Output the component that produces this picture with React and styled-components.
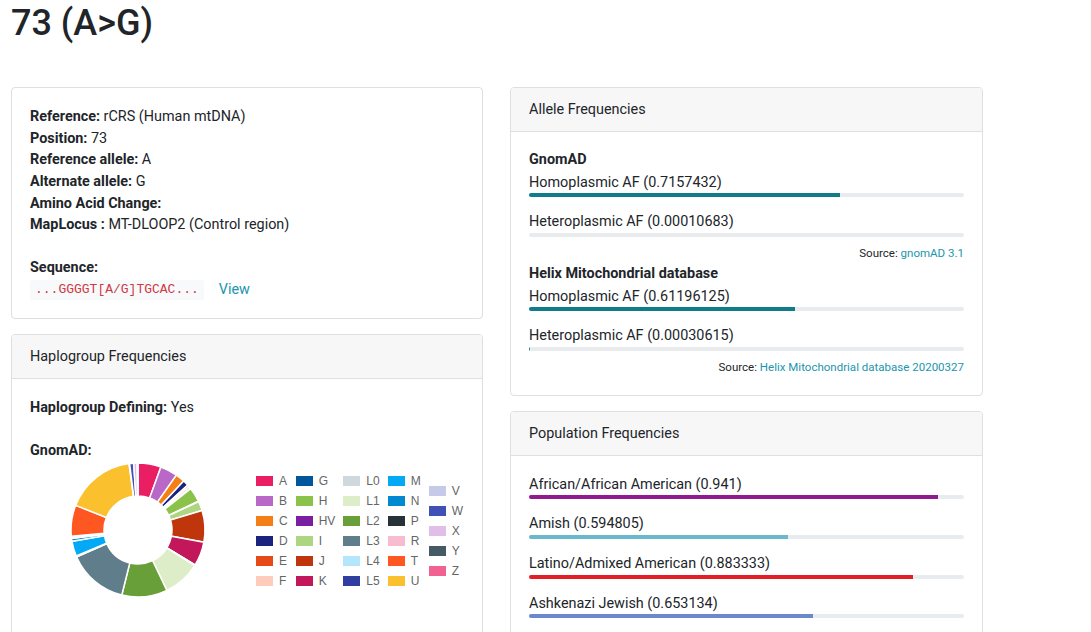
import React from 'react'
import styled, { createGlobalStyle } from 'styled-components'

const GlobalStyle = createGlobalStyle`
  body {
    margin: 0;
    background: #fff;
    color: #212529;
    font-family: Roboto, "Liberation Sans", sans-serif;
    font-size: 14.4px;
    line-height: 1.5;
  }
`

const Page = styled.div`
  padding: 2px 11px 0 11px;
`

const Title = styled.h1`
  margin: 0 0 42px 0;
  font-size: 36px;
  font-weight: 500;
  line-height: 1.2;
`

const Columns = styled.div`
  display: grid;
  grid-template-columns: 472px 473px;
  column-gap: 27px;
  align-items: start;
`

const Column = styled.div`
  display: flex;
  flex-direction: column;
  gap: 15px;
`

const Card = styled.section`
  border: 1px solid #dfdfdf;
  border-radius: 4px;
  background: #fff;
`

const CardHeader = styled.header`
  padding: 11px 18px;
  line-height: 21px;
  background: #f7f7f7;
  border-bottom: 1px solid #dfdfdf;
  border-radius: 3px 3px 0 0;
`

const CardBody = styled.div`
  padding: ${p => p.pad || '18px'};
  line-height: 21.6px;
`

const Line = styled.div`
  min-height: 21.6px;
`

const Label = styled.b`
  font-weight: 700;
`

const SeqRow = styled.div`
  display: flex;
  align-items: center;
  gap: 15px;
`

const Code = styled.code`
  font-family: "Liberation Mono", "DejaVu Sans Mono", monospace;
  font-size: 13px;
  line-height: 16px;
  color: #cf3a44;
  background: #f8f9fa;
  border-radius: 3px;
  padding: 2px 5px;
`

const Link = styled.a`
  color: #1a96ad;
  text-decoration: none;
  cursor: pointer;
`

const ChartRow = styled.div`
  display: flex;
  align-items: center;
  gap: 10px;
  padding-bottom: 40px;
`

const Legend = styled.div`
  display: flex;
  align-items: center;
  gap: 8px;
  font-family: "Liberation Sans", Arial, sans-serif;
  font-size: 12px;
  color: #666;
`

const LegendCol = styled.div`
  display: flex;
  flex-direction: column;
`

const LegendItem = styled.div`
  display: flex;
  align-items: center;
  height: 20px;
  gap: 6px;
  line-height: 14px;
`

const Swatch = styled.span`
  width: 17px;
  height: 10px;
  background: ${p => p.color};
`

const GroupTitle = styled.div`
  font-weight: 700;
  line-height: 21.6px;
  margin-bottom: 1px;
`

const Stat = styled.div`
  & + & {
    margin-top: 14px;
  }
`

const Track = styled.div`
  height: 4px;
  border-radius: 2px;
  background: #e9ecef;
  overflow: hidden;
`

const Fill = styled.div`
  height: 100%;
  background: ${p => p.color};
`

const Source = styled.div`
  margin: 8px 0 2px 0;
  text-align: right;
  font-size: 11.52px;
  line-height: 16px;
`

const haplos = [
  ['A', '#e91e63', 20], ['B', '#ba68c8', 15], ['C', '#f57f17', 8],
  ['D', '#1a237e', 5], ['E', '#e64a19', 1.5], ['F', '#ffccbc', 2],
  ['G', '#01579b', 0.5], ['H', '#8bc34a', 12.5], ['HV', '#7b1fa2', 0.5],
  ['I', '#aed581', 8], ['J', '#bf360c', 27.5], ['K', '#c2185b', 21],
  ['L0', '#cfd8dc', 0.5], ['L1', '#dcedc8', 32.5], ['L2', '#689f38', 39.5],
  ['L3', '#607d8b', 52.3], ['L4', '#b3e5fc', 0.5], ['L5', '#303f9f', 0.5],
  ['M', '#03a9f4', 13], ['N', '#0288d1', 2.5], ['P', '#263238', 0.3],
  ['R', '#f8bbd0', 1.5], ['T', '#ff5722', 27], ['U', '#fbc02d', 60.7],
  ['V', '#c5cae9', 0.5], ['W', '#3f51b5', 3.5], ['X', '#e1bee7', 3],
  ['Y', '#455a64', 0.3], ['Z', '#f06292', 0.4],
]

const legendCols = [
  ['A', 'B', 'C', 'D', 'E', 'F'],
  ['G', 'H', 'HV', 'I', 'J', 'K'],
  ['L0', 'L1', 'L2', 'L3', 'L4', 'L5'],
  ['M', 'N', 'P', 'R', 'T', 'U'],
  ['V', 'W', 'X', 'Y', 'Z'],
]

const colorOf = name => haplos.find(h => h[0] === name)[1]

function point(cx, cy, r, deg) {
  const a = (deg - 90) * Math.PI / 180
  return [cx + r * Math.cos(a), cy + r * Math.sin(a)]
}

function arc(cx, cy, r1, r2, a0, a1) {
  const large = a1 - a0 > 180 ? 1 : 0
  const [x0, y0] = point(cx, cy, r2, a0)
  const [x1, y1] = point(cx, cy, r2, a1)
  const [x2, y2] = point(cx, cy, r1, a1)
  const [x3, y3] = point(cx, cy, r1, a0)
  return `M${x0} ${y0} A${r2} ${r2} 0 ${large} 1 ${x1} ${y1} L${x2} ${y2} A${r1} ${r1} 0 ${large} 0 ${x3} ${y3} Z`
}

function Donut() {
  let start = 0
  return (
    <svg width="216" height="140" viewBox="0 0 216 140">
      {haplos.map(([name, color, deg]) => {
        const d = arc(108, 69, 34, 67, start, start + deg)
        start += deg
        return <path key={name} d={d} fill={color} stroke="#fff" strokeWidth="1.5" />
      })}
    </svg>
  )
}

function Bar({ label, value, color }) {
  return (
    <Stat>
      <div>{label} ({value})</div>
      <Track>
        <Fill color={color} style={{ width: `${Number(value) * 100}%` }} />
      </Track>
    </Stat>
  )
}

const teal = '#127b8a'

const populations = [
  ['African/African American', '0.941', '#911a8f'],
  ['Amish', '0.594805', '#69b8cb'],
  ['Latino/Admixed American', '0.883333', '#e41e26'],
  ['Ashkenazi Jewish', '0.653134', '#6a88cc'],
]

export default function App() {
  return (
    <Page>
      <GlobalStyle />
      <Title>73 (A&gt;G)</Title>
      <Columns>
        <Column>
          <Card>
            <CardBody pad="18px 18px 17px 18px">
              <Line><Label>Reference:</Label> rCRS (Human mtDNA)</Line>
              <Line><Label>Position:</Label> 73</Line>
              <Line><Label>Reference allele:</Label> A</Line>
              <Line><Label>Alternate allele:</Label> G</Line>
              <Line><Label>Amino Acid Change:</Label></Line>
              <Line><Label>MapLocus :</Label> MT-DLOOP2 (Control region)</Line>
              <Line />
              <Line><Label>Sequence:</Label></Line>
              <SeqRow>
                <Code>...GGGGT[A/G]TGCAC...</Code>
                <Link>View</Link>
              </SeqRow>
            </CardBody>
          </Card>
          <Card>
            <CardHeader>Haplogroup Frequencies</CardHeader>
            <CardBody>
              <Line><Label>Haplogroup Defining:</Label> Yes</Line>
              <Line />
              <Line><Label>GnomAD:</Label></Line>
              <ChartRow>
                <Donut />
                <Legend>
                  {legendCols.map((col, i) => (
                    <LegendCol key={i}>
                      {col.map(name => (
                        <LegendItem key={name}>
                          <Swatch color={colorOf(name)} />
                          {name}
                        </LegendItem>
                      ))}
                    </LegendCol>
                  ))}
                </Legend>
              </ChartRow>
            </CardBody>
          </Card>
        </Column>
        <Column>
          <Card>
            <CardHeader>Allele Frequencies</CardHeader>
            <CardBody pad="17px 18px 18px 18px">
              <GroupTitle>GnomAD</GroupTitle>
              <Bar label="Homoplasmic AF" value="0.7157432" color={teal} />
              <Bar label="Heteroplasmic AF" value="0.00010683" color={teal} />
              <Source>Source: <Link>gnomAD 3.1</Link></Source>
              <GroupTitle>Helix Mitochondrial database</GroupTitle>
              <Bar label="Homoplasmic AF" value="0.61196125" color={teal} />
              <Bar label="Heteroplasmic AF" value="0.00030615" color={teal} />
              <Source>Source: <Link>Helix Mitochondrial database 20200327</Link></Source>
            </CardBody>
          </Card>
          <Card>
            <CardHeader>Population Frequencies</CardHeader>
            <CardBody>
              {populations.map(([name, value, color]) => (
                <Bar key={name} label={name} value={value} color={color} />
              ))}
            </CardBody>
          </Card>
        </Column>
      </Columns>
    </Page>
  )
}
